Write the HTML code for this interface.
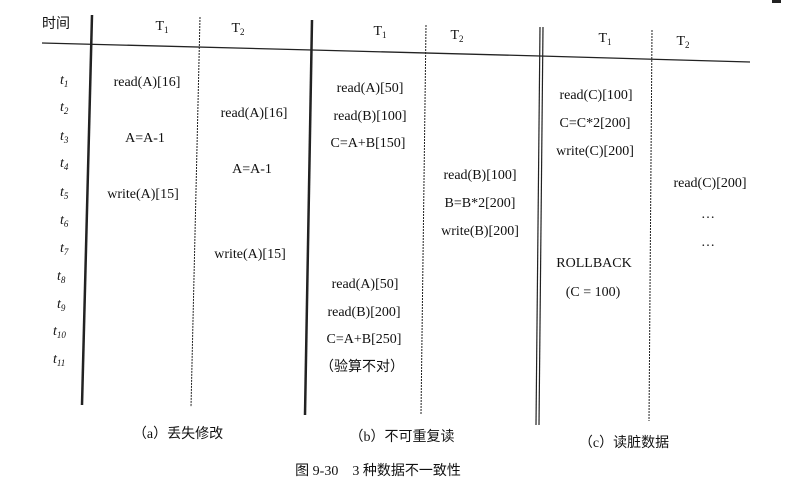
<!DOCTYPE html>
<html><head><meta charset="utf-8"><style>
html,body{margin:0;padding:0;background:#fff;}
svg{display:block;}
text{font-family:"Liberation Serif","Noto Serif CJK SC",serif;font-size:14px;fill:#111;}
.c{text-anchor:middle;}
.i{font-style:italic;}
.cn{font-family:"Liberation Serif","Noto Sans CJK SC",sans-serif;}
</style></head><body>
<svg width="795" height="497" viewBox="0 0 795 497">
<g stroke="#222" fill="none">
<polyline points="42,43 312,50 540,56 750,62" stroke-width="1.3"/>
<line x1="92" y1="15" x2="82" y2="405" stroke-width="2.5"/>
<line x1="200" y1="17" x2="191" y2="407" stroke-width="1" stroke-dasharray="2,1"/>
<line x1="312" y1="20" x2="305" y2="415" stroke-width="2.5"/>
<line x1="426" y1="25" x2="421" y2="414" stroke-width="1" stroke-dasharray="2,1"/>
<line x1="540" y1="27" x2="536" y2="425" stroke-width="1.2"/>
<line x1="543" y1="27" x2="539" y2="425" stroke-width="1.2"/>
<line x1="652" y1="30" x2="649" y2="421" stroke-width="1" stroke-dasharray="2,1"/>
</g>
<rect x="772" y="0" width="9" height="3" fill="#222"/>
<text x="42" y="28" class="cn">时间</text>
<text x="162" y="30" class="c">T<tspan font-size="9" dy="3">1</tspan></text>
<text x="238" y="32" class="c">T<tspan font-size="9" dy="3">2</tspan></text>
<text x="380" y="35" class="c">T<tspan font-size="9" dy="3">1</tspan></text>
<text x="457" y="39" class="c">T<tspan font-size="9" dy="3">2</tspan></text>
<text x="605" y="42" class="c">T<tspan font-size="9" dy="3">1</tspan></text>
<text x="683" y="45" class="c">T<tspan font-size="9" dy="3">2</tspan></text>
<g class="i">
<text x="60" y="84">t<tspan font-size="9" dy="3">1</tspan></text>
<text x="60" y="111">t<tspan font-size="9" dy="3">2</tspan></text>
<text x="60" y="140">t<tspan font-size="9" dy="3">3</tspan></text>
<text x="60" y="167">t<tspan font-size="9" dy="3">4</tspan></text>
<text x="60" y="196">t<tspan font-size="9" dy="3">5</tspan></text>
<text x="60" y="224">t<tspan font-size="9" dy="3">6</tspan></text>
<text x="60" y="252">t<tspan font-size="9" dy="3">7</tspan></text>
<text x="57" y="280">t<tspan font-size="9" dy="3">8</tspan></text>
<text x="57" y="308">t<tspan font-size="9" dy="3">9</tspan></text>
<text x="53" y="335">t<tspan font-size="9" dy="3">10</tspan></text>
<text x="53" y="363">t<tspan font-size="9" dy="3">11</tspan></text>
</g>
<text x="147" y="86" class="c">read(A)[16]</text>
<text x="145" y="142" class="c">A=A-1</text>
<text x="143" y="198" class="c">write(A)[15]</text>
<text x="254" y="117" class="c">read(A)[16]</text>
<text x="252" y="173" class="c">A=A-1</text>
<text x="250" y="258" class="c">write(A)[15]</text>
<text x="370" y="92" class="c">read(A)[50]</text>
<text x="370" y="120" class="c">read(B)[100]</text>
<text x="368" y="147" class="c">C=A+B[150]</text>
<text x="365" y="288" class="c">read(A)[50]</text>
<text x="364" y="316" class="c">read(B)[200]</text>
<text x="364" y="343" class="c">C=A+B[250]</text>
<text x="362" y="371" class="c cn">（验算不对）</text>
<text x="480" y="179" class="c">read(B)[100]</text>
<text x="480" y="207" class="c">B=B*2[200]</text>
<text x="480" y="235" class="c">write(B)[200]</text>
<text x="596" y="99" class="c">read(C)[100]</text>
<text x="595" y="127" class="c">C=C*2[200]</text>
<text x="595" y="155" class="c">write(C)[200]</text>
<text x="594" y="267" class="c">ROLLBACK</text>
<text x="593" y="296" class="c">(C = 100)</text>
<text x="710" y="187" class="c">read(C)[200]</text>
<text x="708" y="218" class="c">…</text>
<text x="708" y="246" class="c">…</text>
<text x="178" y="438" class="c cn">（a）丢失修改</text>
<text x="402" y="441" class="c cn">（b）不可重复读</text>
<text x="624" y="447" class="c cn">（c）读脏数据</text>
<text x="378" y="475" class="c cn">图 9-30　3 种数据不一致性</text>
</svg>
</body></html>
